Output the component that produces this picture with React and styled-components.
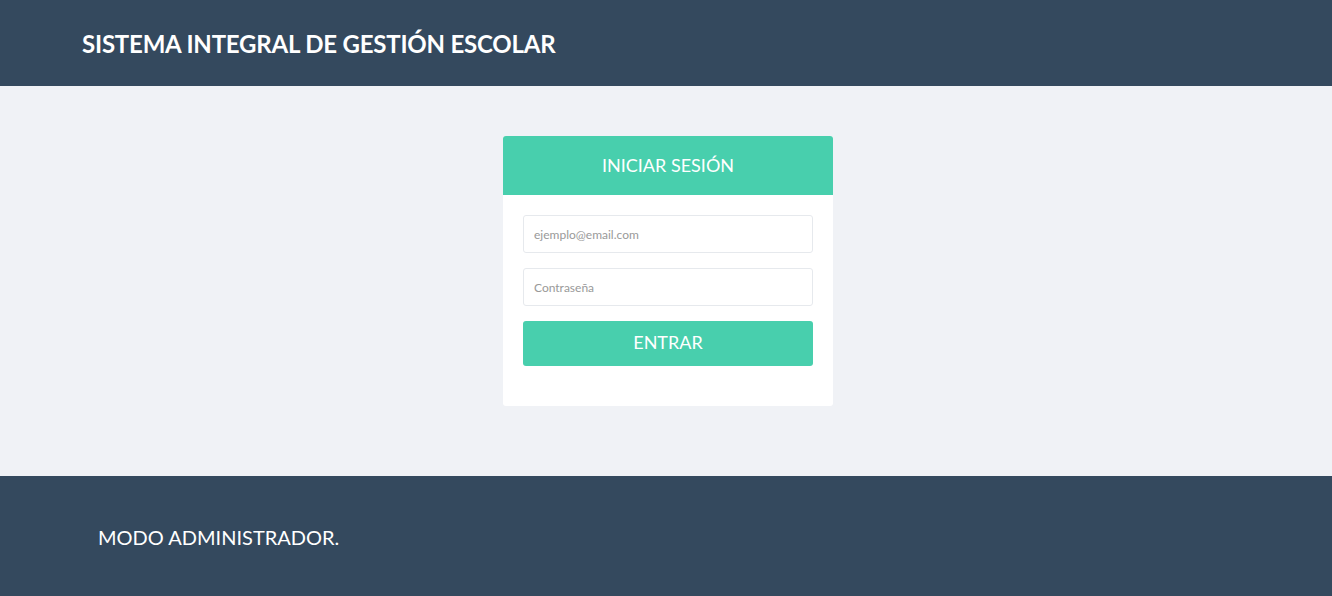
import React from "react";
import styled, { createGlobalStyle } from "styled-components";

const GlobalStyle = createGlobalStyle`
  html, body {
    margin: 0;
    padding: 0;
    background: #f0f2f6;
    font-family: "Lato", "Open Sans", sans-serif;
  }
  * { box-sizing: border-box; }
`;

const TopBar = styled.header`
  height: 86px;
  background: #34495e;
  display: flex;
  align-items: center;
  padding-left: 82px;
  h1 {
    margin: 0;
    color: #fff;
    font-size: 24px;
    font-weight: 700;
    letter-spacing: -0.2px;
  }
`;

const Main = styled.main`
  height: 390px;
  display: flex;
  justify-content: center;
  padding: 50px 0 0 4px;
`;

const Card = styled.div`
  width: 330px;
  height: 270px;
  background: #fff;
  border-radius: 3px;
  overflow: hidden;
`;

const CardHead = styled.div`
  height: 59px;
  background: #48cfad;
  color: #fff;
  display: flex;
  align-items: center;
  justify-content: center;
  padding-bottom: 1px;
  font-size: 18px;
  font-weight: 400;
`;

const Form = styled.form`
  display: flex;
  flex-direction: column;
  gap: 15px;
  padding: 20px 20px 40px;
`;

const Field = styled.input`
  height: 38px;
  width: 100%;
  border: 1px solid #e6e9ed;
  border-radius: 3px;
  padding: 0 10px;
  font-family: "Lato", sans-serif;
  font-size: 12px;
  outline: none;
  &::placeholder {
    color: #999;
  }
`;

const Submit = styled.button`
  height: 45px;
  width: 100%;
  border: none;
  border-radius: 3px;
  background: #48cfad;
  color: #fff;
  font-family: "Lato", sans-serif;
  font-size: 18px;
  padding: 0 0 3px;
  cursor: pointer;
`;

const Footer = styled.footer`
  height: 120px;
  background: #34495e;
  display: flex;
  align-items: center;
  padding: 2px 0 0 98px;
  color: #fff;
  font-size: 20px;
`;

export default function App() {
  return (
    <>
      <GlobalStyle />
      <TopBar>
        <h1>SISTEMA INTEGRAL DE GESTIÓN ESCOLAR</h1>
      </TopBar>
      <Main>
        <Card>
          <CardHead>INICIAR SESIÓN</CardHead>
          <Form onSubmit={(e) => e.preventDefault()}>
            <Field type="email" placeholder="ejemplo@email.com" />
            <Field type="password" placeholder="Contraseña" />
            <Submit type="submit">ENTRAR</Submit>
          </Form>
        </Card>
      </Main>
      <Footer>MODO ADMINISTRADOR.</Footer>
    </>
  );
}
